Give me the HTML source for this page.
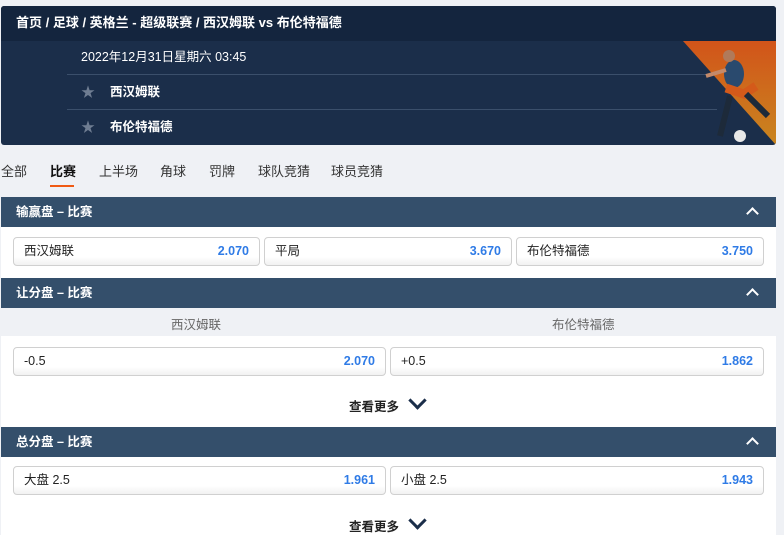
<!DOCTYPE html>
<html><head><meta charset="utf-8"><style>
*{margin:0;padding:0;box-sizing:border-box}
body{width:784px;height:535px;overflow:hidden;background:#eff1f5;font-family:"Liberation Sans","Noto Sans CJK SC",sans-serif;position:relative}
.card{position:absolute;left:1px;top:6px;width:775px;height:139px;background:#1b2e4a;border-radius:3px;overflow:hidden}
.top{height:35px;background:#14253e;color:#fff;font-weight:bold;font-size:13px;line-height:33px;padding-left:15px}
.row{position:absolute;left:66px;width:650px;border-bottom:1px solid #3b4f6b;color:#fff;font-size:12.5px}
.star{position:absolute;left:14px;color:#6f7d92;font-size:14px}
.tri{position:absolute;left:682px;top:35px;width:93px;height:104px;background:linear-gradient(180deg,#d2541a,#c9861f);clip-path:polygon(0 0,100% 0,100% 100%)}
.tabs{position:absolute;top:161px;left:0;font-size:13px;color:#333}
.tabs span{position:absolute;white-space:nowrap}
.hd{position:absolute;left:1px;width:775px;height:30px;background:#344f6b;color:#fff;font-weight:bold;font-size:12.5px;line-height:30px;padding-left:15px}
.hd:after{content:"";position:absolute;right:19px;top:12px;width:7px;height:7px;border-left:2.5px solid #fff;border-top:2.5px solid #fff;transform:rotate(45deg)}
.wh{position:absolute;left:1px;width:775px;background:#fff}
.b{position:absolute;height:29px;border:1px solid #d0d0d0;border-radius:4px;background:linear-gradient(#fff 70%,#f1f1f1);font-size:12.5px;color:#222;line-height:27px;padding:0 10px}
.b i{font-style:normal;float:right;color:#2f7be6;font-weight:bold}
.more{position:absolute;left:349px;font-size:12.5px;font-weight:bold;color:#222}
.more:after{content:"";position:absolute;left:62px;top:-2px;width:10px;height:10px;border-right:3px solid #1b2e4a;border-bottom:3px solid #1b2e4a;transform:rotate(45deg)}
.sub{position:absolute;top:308px;left:1px;width:775px;height:28px;background:#eff1f5;font-size:12.5px;color:#666}
</style></head><body>
<div class="card">
<div class="top">首页 / 足球 / 英格兰 - 超级联赛 / 西汉姆联 vs 布伦特福德</div>
<div class="row" style="top:35px;height:34px;line-height:33px;padding-left:14px">2022年12月31日星期六 03:45</div>
<div class="row" style="top:69px;height:35px;line-height:34px;padding-left:43px;font-weight:bold"><span class="star">★</span>西汉姆联</div>
<div class="row" style="top:104px;height:35px;line-height:34px;padding-left:43px;font-weight:bold;border:none"><span class="star">★</span>布伦特福德</div>
<div class="tri"></div>
<svg style="position:absolute;left:695px;top:40px" width="80" height="100"><ellipse cx="38" cy="28" rx="10" ry="14" fill="#2a4a6e"/><circle cx="33" cy="10" r="6" fill="#b07a5a"/><path d="M10 30 L30 24" stroke="#c48a6a" stroke-width="4"/><path d="M30 42 L48 48 L60 40" stroke="#d45a1a" stroke-width="9" fill="none"/><path d="M34 50 L24 90" stroke="#1d2a3a" stroke-width="6"/><path d="M50 48 L72 70" stroke="#1d2a3a" stroke-width="6"/><circle cx="44" cy="90" r="6" fill="#e8e8e8"/></svg>
</div>
<div class="tabs">
<span style="left:1px">全部</span><span style="left:50px;font-weight:bold;color:#111">比赛</span><span style="left:99px">上半场</span><span style="left:160px">角球</span><span style="left:209px">罚牌</span><span style="left:258px">球队竞猜</span><span style="left:331px">球员竞猜</span>
</div>
<div style="position:absolute;left:50px;top:185px;width:24px;height:2px;background:#f05a14"></div>

<div class="hd" style="top:197px">输赢盘 – 比赛</div>
<div class="wh" style="top:227px;height:51px"></div>
<div class="b" style="left:13px;top:237px;width:247px">西汉姆联<i>2.070</i></div>
<div class="b" style="left:264px;top:237px;width:248px">平局<i>3.670</i></div>
<div class="b" style="left:516px;top:237px;width:248px">布伦特福德<i>3.750</i></div>

<div class="hd" style="top:278px">让分盘 – 比赛</div>
<div class="sub"><span style="position:absolute;left:170px;top:6px">西汉姆联</span><span style="position:absolute;left:551px;top:6px">布伦特福德</span></div>
<div class="wh" style="top:336px;height:91px"></div>
<div class="b" style="left:13px;top:347px;width:373px">-0.5<i>2.070</i></div>
<div class="b" style="left:390px;top:347px;width:374px">+0.5<i>1.862</i></div>
<div class="more" style="top:396px">查看更多</div>

<div class="hd" style="top:427px">总分盘 – 比赛</div>
<div class="wh" style="top:457px;height:78px"></div>
<div class="b" style="left:13px;top:466px;width:373px">大盘 2.5<i>1.961</i></div>
<div class="b" style="left:390px;top:466px;width:374px">小盘 2.5<i>1.943</i></div>
<div class="more" style="top:516px">查看更多</div>
</body></html>
